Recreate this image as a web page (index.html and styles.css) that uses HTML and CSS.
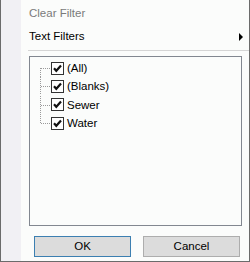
FILE: index.html
```html
<!DOCTYPE html>
<html>
<head>
<meta charset="utf-8">
<link rel="stylesheet" href="styles.css">
</head>
<body>
<div class="menu">
  <div class="gutter"></div>
  <div class="main">
    <div class="item disabled">Clear Filter</div>
    <div class="item sub"><span>Text Filters</span><span class="arrow"></span></div>
    <div class="sep"></div>
    <div class="listbox">
      <div class="row">
        <svg class="branch" width="11" height="18" viewBox="0 0 11 18"><path d="M0.5 9V18M1 9.5H11" /></svg>
        <svg class="check" width="13" height="13" viewBox="0 0 13 13"><rect x="0.5" y="0.5" width="12" height="12"/><path d="M3 6.2L5.3 8.8L10 3.6"/></svg>
        <span>(All)</span>
      </div>
      <div class="row">
        <svg class="branch" width="11" height="18" viewBox="0 0 11 18"><path d="M0.5 0V18M1 9.5H11" /></svg>
        <svg class="check" width="13" height="13" viewBox="0 0 13 13"><rect x="0.5" y="0.5" width="12" height="12"/><path d="M3 6.2L5.3 8.8L10 3.6"/></svg>
        <span>(Blanks)</span>
      </div>
      <div class="row">
        <svg class="branch" width="11" height="18" viewBox="0 0 11 18"><path d="M0.5 0V18M1 9.5H11" /></svg>
        <svg class="check" width="13" height="13" viewBox="0 0 13 13"><rect x="0.5" y="0.5" width="12" height="12"/><path d="M3 6.2L5.3 8.8L10 3.6"/></svg>
        <span>Sewer</span>
      </div>
      <div class="row">
        <svg class="branch" width="11" height="18" viewBox="0 0 11 18"><path d="M0.5 0V10M1 9.5H11" /></svg>
        <svg class="check" width="13" height="13" viewBox="0 0 13 13"><rect x="0.5" y="0.5" width="12" height="12"/><path d="M3 6.2L5.3 8.8L10 3.6"/></svg>
        <span>Water</span>
      </div>
    </div>
    <div class="buttons">
      <button class="btn default">OK</button>
      <button class="btn">Cancel</button>
    </div>
  </div>
</div>
</body>
</html>
```
FILE: styles.css
```css
html, body {
  margin: 0;
  padding: 0;
  background: #fbfcfb;
}
.menu {
  width: 250px;
  height: 262px;
  box-sizing: border-box;
  border-left: 1px solid #6b6b6b;
  border-right: 1px solid #6b6b6b;
  border-bottom: 1px solid #6b6b6b;
  display: flex;
  font-family: "Liberation Sans", Arial, sans-serif;
  font-size: 11.5px;
  color: #000;
}
.gutter {
  width: 20px;
  background: #f1f0f4;
}
.main {
  flex: 1;
  background: #fbfcfb;
  display: flex;
  flex-direction: column;
}
.item {
  line-height: 14px;
  padding-left: 8px;
}
.disabled {
  color: #7a7a7a;
  height: 18px;
  padding-top: 6px;
}
.sub {
  height: 17px;
  padding-top: 5px;
  padding-right: 6px;
  display: flex;
  justify-content: space-between;
  align-items: flex-start;
}
.arrow {
  width: 0;
  height: 0;
  margin-top: 4px;
  border-left: 4px solid #000;
  border-top: 4px solid transparent;
  border-bottom: 4px solid transparent;
}
.sep {
  height: 1px;
  background: #d5d5d5;
  margin-top: 4px;
  margin-left: 7px;
}
.listbox {
  margin-top: 5px;
  margin-left: 8px;
  width: 213px;
  height: 170px;
  box-sizing: border-box;
  border: 1px solid #828790;
  background: #fbfcfb;
  padding-top: 2px;
  padding-left: 10px;
}
.row {
  height: 18.3px;
  display: flex;
  align-items: center;
}
.branch {
  display: block;
  flex: none;
}
.branch path {
  stroke: #9a9a9a;
  stroke-width: 1;
  stroke-dasharray: 1 1;
  fill: none;
}
.check {
  display: block;
  flex: none;
  margin-left: 0;
  margin-right: 3px;
}
.check rect {
  fill: #ffffff;
  stroke: #333333;
}
.check path {
  fill: none;
  stroke: #111;
  stroke-width: 2.2;
}
.buttons {
  display: flex;
  gap: 12px;
  margin-top: 10px;
  margin-left: 13px;
}
.btn {
  width: 97px;
  height: 21px;
  box-sizing: border-box;
  border: 1px solid #adadad;
  background: #dcdcdc;
  font-family: "Liberation Sans", Arial, sans-serif;
  font-size: 11.5px;
  color: #000;
  padding: 0;
  margin: 0;
  line-height: 19px;
}
.btn.default {
  border-color: #3c7fb1;
}
```
